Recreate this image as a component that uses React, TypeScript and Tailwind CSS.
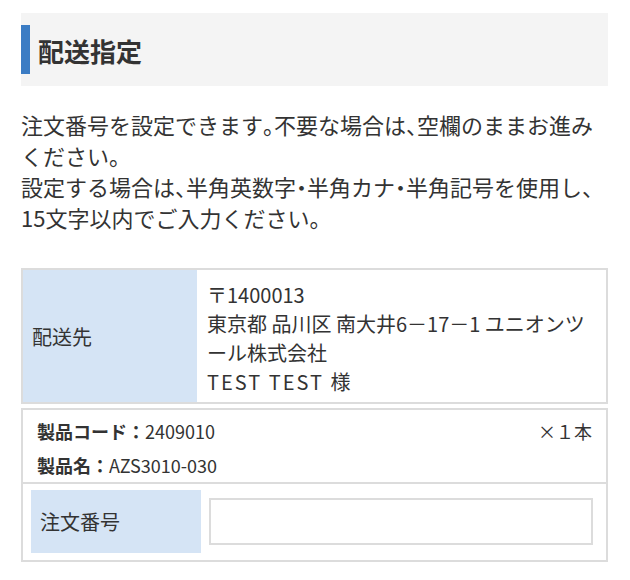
import React from "react";

const H = ({ children }: { children: React.ReactNode }) => (
  <span className="[font-feature-settings:'halt']">{children}</span>
);

export default function App() {
  return (
    <div
      className="w-[630px] h-[580px] bg-white text-[#333] pt-[13px] pl-[21px] pr-[22px]"
      style={{ fontFamily: '"Noto Sans CJK JP", "Noto Sans", sans-serif' }}
    >
      <div className="h-[73px] bg-[#f4f4f4] flex items-center">
        <div className="w-[9px] h-[49px] bg-[#3b7cc4]" />
        <h2 className="ml-[8px] text-[26px] font-bold leading-none pt-[3px]">配送指定</h2>
      </div>

      <p className="mt-[23px] text-[22px] leading-[31px]">
        注文番号を設定できます<H>。</H>不要な場合は<H>、</H>空欄のままお進みください<H>。</H>
        <br />
        設定する場合は<H>、</H>半角英数字<H>・</H>半角カナ<H>・</H>半角記号を使用し<H>、</H>15文字以内でご入力ください<H>。</H>
      </p>

      <div className="mt-[35px] border-2 border-[#dcdcdc] flex text-[20px]">
        <div className="w-[174px] bg-[#d5e4f5] flex items-center pl-[9px] pt-[2px]">配送先</div>
        <div className="flex-1 pl-[10px] pr-[12px] pt-[10px] pb-[6px] leading-[29px]">
          <div>〒1400013</div>
          <div>東京都 品川区 南大井6－17－1 ユニオンツール株式会社</div>
          <div className="tracking-[2px]">TEST TEST 様</div>
        </div>
      </div>

      <div className="mt-[4px] border-2 border-[#dcdcdc]">
        <div className="h-[72px] px-[14px] pt-[4px] leading-[34px] text-[18px]">
          <div className="flex justify-between">
            <div>
              <span className="font-bold">製品コード：</span>2409010
            </div>
            <div>×１本</div>
          </div>
          <div>
            <span className="font-bold">製品名：</span>AZS3010-030
          </div>
        </div>
        <div className="border-t-2 border-[#dcdcdc] flex px-[8px] pt-[6px] pb-[7px] text-[20px]">
          <div className="w-[170px] h-[63px] bg-[#d5e4f5] flex items-center pl-[9px]">注文番号</div>
          <div className="flex-1 pl-[8px] pr-[5px] pt-[8px]">
            <input
              type="text"
              className="w-full h-[47px] border-2 border-[#dcdcdc] bg-white outline-none px-2"
            />
          </div>
        </div>
      </div>
    </div>
  );
}
